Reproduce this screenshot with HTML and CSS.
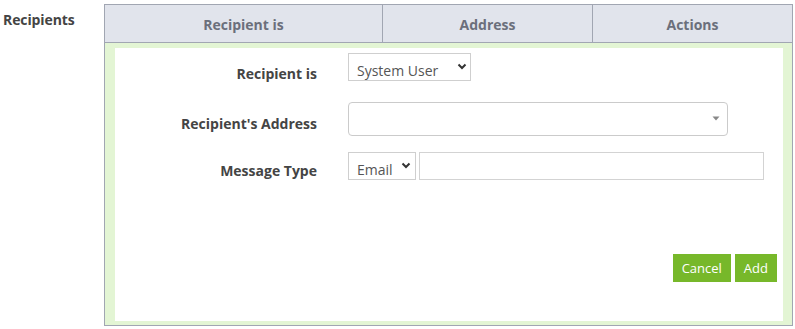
FILE: index.html
```html
<!DOCTYPE html>
<html>
<head>
<meta charset="utf-8">
<link rel="stylesheet" href="styles.css">
</head>
<body>
<div class="page">
  <div class="section-label">Recipients</div>
  <div class="table">
    <div class="thead">
      <div class="th">Recipient is</div>
      <div class="th">Address</div>
      <div class="th last">Actions</div>
    </div>
    <div class="tbody">
      <div class="panel">
        <div class="row row1">
          <div class="label">Recipient is</div>
          <div class="select sel-user">
            <span class="val">System User</span>
            <svg class="chev" width="10" height="7" viewBox="0 0 10 7"><polyline points="1.5,1.5 5,5 8.5,1.5" fill="none" stroke="#333" stroke-width="2"/></svg>
          </div>
        </div>
        <div class="row row2">
          <div class="label">Recipient's Address</div>
          <div class="select2">
            <svg class="tri" width="8" height="5" viewBox="0 0 8 5"><polygon points="0.5,0.5 7.5,0.5 4,4.5" fill="#888"/></svg>
          </div>
        </div>
        <div class="row row3">
          <div class="label">Message Type</div>
          <div class="select sel-email">
            <span class="val">Email</span>
            <svg class="chev" width="10" height="7" viewBox="0 0 10 7"><polyline points="1.5,1.5 5,5 8.5,1.5" fill="none" stroke="#333" stroke-width="2"/></svg>
          </div>
          <div class="input"></div>
        </div>
        <div class="actions">
          <button class="btn">Cancel</button>
          <button class="btn">Add</button>
        </div>
      </div>
    </div>
  </div>
</div>
</body>
</html>
```

FILE: styles.css
```css
html, body {
  margin: 0;
  padding: 0;
  background: #fff;
}
body {
  font-family: "Open Sans", "Noto Sans", sans-serif;
  font-size: 14px;
  color: #444;
}
.page {
  display: flex;
  align-items: flex-start;
  padding-top: 4px;
}
.section-label {
  width: 104px;
  box-sizing: border-box;
  padding-left: 3px;
  font-weight: 700;
  font-size: 14px;
  color: #444;
  line-height: 20px;
  margin-top: 6px;
  letter-spacing: -0.1px;
}
.table {
  width: 689px;
  box-sizing: border-box;
  border: 1px solid #a1a6b2;
}
.thead {
  display: grid;
  grid-template-columns: 278px 210px 1fr;
  background: #e1e4ec;
  border-bottom: 1px solid #a1a6b2;
  height: 37px;
}
.th {
  border-right: 1px solid #a1a6b2;
  display: flex;
  align-items: center;
  justify-content: center;
  font-weight: 700;
  font-size: 14px;
  color: #6b6f7b;
  padding-top: 2px;
  box-sizing: border-box;
}
.th.last {
  border-right: none;
}
.tbody {
  background: #e3f5d4;
  padding: 5px 9px 4px 10px;
}
.panel {
  background: #fff;
  height: 273px;
  box-sizing: border-box;
  padding: 5px 6px 0 0;
  display: flex;
  flex-direction: column;
}
.row {
  display: flex;
  align-items: center;
}
.label {
  width: 202px;
  text-align: right;
  font-weight: 700;
  font-size: 14px;
  color: #444;
  margin-right: 31px;
  padding-top: 8px;
}
.row1 .label { padding-top: 12px; }
.row1 { height: 28px; }
.row2 { height: 34px; margin-top: 21px; }
.row3 { height: 28px; margin-top: 16px; }
.select {
  height: 28px;
  box-sizing: border-box;
  border: 1px solid #cfcfcf;
  display: flex;
  align-items: center;
  justify-content: space-between;
  padding: 0 4px 0 8px;
  color: #555;
  font-size: 14px;
}
.val { padding-top: 7px; }
.sel-user { width: 123px; padding-right: 3px; }
.sel-email { width: 68px; }
.chev { margin-top: -2px; }
.select2 {
  width: 380px;
  height: 34px;
  box-sizing: border-box;
  border: 1px solid #cbcbcb;
  border-radius: 4px;
  display: flex;
  align-items: center;
  justify-content: flex-end;
  padding-right: 7px;
}
.tri { margin-top: -2px; }
.input {
  width: 345px;
  height: 28px;
  box-sizing: border-box;
  border: 1px solid #d3d3d3;
  margin-left: 3px;
}
.actions {
  display: flex;
  justify-content: flex-end;
  gap: 4px;
  margin-top: 74px;
}
.btn {
  height: 28px;
  border: none;
  background: #77b82a;
  color: #fff;
  font-family: "Open Sans", "Noto Sans", sans-serif;
  font-size: 13px;
  padding: 0 9px 0;
  margin: 0;
}
```
